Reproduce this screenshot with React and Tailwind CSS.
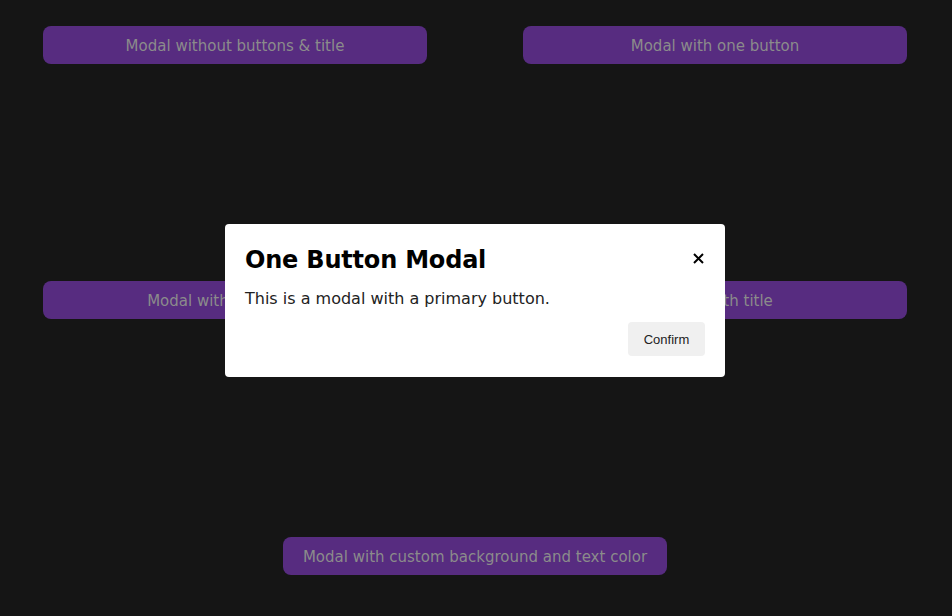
import React from "react";

function DimButton({ children, className = "" }) {
  return (
    <button
      className={
        "h-[38px] w-[384px] rounded-lg bg-[#572c80] pt-[2px] text-[15px] text-[#8b8b8b] " +
        className
      }
    >
      {children}
    </button>
  );
}

export default function App() {
  return (
    <div className="relative h-[616px] w-[952px] overflow-hidden bg-[#151515] font-['DejaVu_Sans',sans-serif]">
      <div className="ml-[43px] grid w-[864px] grid-cols-2 gap-x-[96px] gap-y-[217px] pt-[26px]">
        <DimButton>Modal without buttons &amp; title</DimButton>
        <DimButton>Modal with one button</DimButton>
        <DimButton>Modal with two buttons</DimButton>
        <DimButton>Modal with title</DimButton>
        <div className="col-span-2 flex justify-center pt-[1px]">
          <DimButton>Modal with custom background and text color</DimButton>
        </div>
      </div>

      {/* modal */}
      <div className="absolute left-[225px] top-[224px] w-[500px] rounded bg-white px-5 pt-5 pb-[21px]">
        <div className="flex items-center justify-between">
          <h2 className="text-2xl font-bold tracking-[-0.2px] text-black">One Button Modal</h2>
          <button className="mb-[4px] flex h-4 w-[14px] items-center justify-center">
            <svg width="11" height="11" viewBox="0 0 11 11">
              <path d="M1 1L10 10M10 1L1 10" stroke="#000" strokeWidth="2" />
            </svg>
          </button>
        </div>
        <p className="mt-[11px] text-base text-[#222]">
          This is a modal with a primary button.
        </p>
        <div className="mt-[11px] flex justify-end">
          <button className="h-[34px] w-[77px] rounded bg-[#f0f0f0] pt-px font-['Liberation_Sans',sans-serif] text-[13px] text-[#222]">
            Confirm
          </button>
        </div>
      </div>
    </div>
  );
}
